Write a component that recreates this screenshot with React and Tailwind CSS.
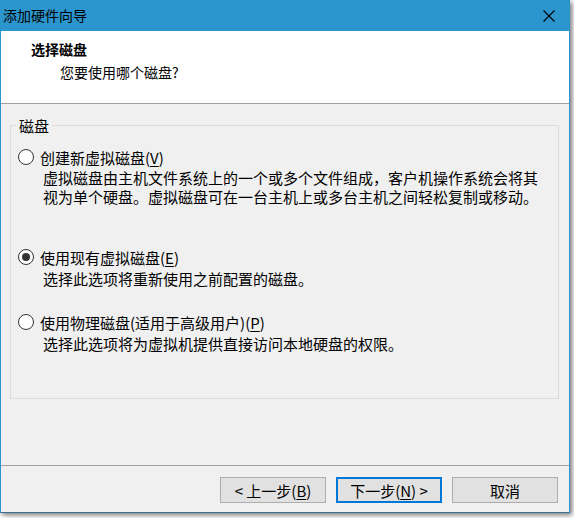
import React from "react";

function Radio({ checked }) {
  return (
    <span className="w-[16px] h-[16px] rounded-full border border-[#333333] bg-white flex items-center justify-center shrink-0">
      {checked && <span className="w-[8px] h-[8px] rounded-full bg-[#333333]" />}
    </span>
  );
}

export default function App() {
  return (
    <div className="w-[574px] h-[518px] bg-white text-black font-['Noto_Sans_CJK_SC','Microsoft_YaHei',sans-serif]">
      <div className="w-[570px] h-[513px] border border-t-0 border-[#2b95cd] border-b-[#3f6f8f] bg-[#f0f0f0] flex flex-col shadow-[2px_2px_5px_rgba(0,0,0,0.55)]">
        {/* Title bar */}
        <div className="h-[31px] bg-[#2b95cd] flex items-center justify-between pl-[2px] pr-[14px] shrink-0">
          <span className="text-[14px] leading-[19px]">添加硬件向导</span>
          <svg width="12" height="12" viewBox="0 0 12 12" className="block">
            <path d="M0.5 0.5 L11.5 11.5 M11.5 0.5 L0.5 11.5" stroke="#000" strokeWidth="1.1" fill="none" />
          </svg>
        </div>
        {/* Header */}
        <div className="h-[73px] bg-white border-b border-[#a0a0a0] pl-[30px] pt-[9px] shrink-0">
          <div className="text-[14px] leading-[19px] font-bold">选择磁盘</div>
          <div className="text-[14px] leading-[19px] mt-[4px] ml-[29px]">您要使用哪个磁盘?</div>
        </div>
        {/* Group box */}
        <div className="relative mt-[21px] ml-[9px] w-[549px] h-[274px] border border-[#dcdcdc] pt-[21px] pl-[7px] shrink-0 text-[15px] leading-[19px]">
          <span className="absolute left-[5px] top-[-10px] px-[3px] bg-[#f0f0f0] leading-[19px]">磁盘</span>
          <div className="flex items-center h-[20px] gap-[6px]">
            <Radio />
            <span>创建新虚拟磁盘(<span className="underline underline-offset-2">V</span>)</span>
          </div>
          <div className="mt-[1px] ml-[25px]">
            <div>虚拟磁盘由主机文件系统上的一个或多个文件组成，客户机操作系统会将其</div>
            <div>视为单个硬盘。虚拟磁盘可在一台主机上或多台主机之间轻松复制或移动。</div>
          </div>
          <div className="flex items-center h-[20px] gap-[6px] mt-[41px]">
            <Radio checked />
            <span>使用现有虚拟磁盘(<span className="underline underline-offset-2">E</span>)</span>
          </div>
          <div className="mt-[2px] ml-[25px]">选择此选项将重新使用之前配置的磁盘。</div>
          <div className="flex items-center h-[20px] gap-[6px] mt-[24px]">
            <Radio />
            <span>使用物理磁盘(适用于高级用户)(<span className="underline underline-offset-2">P</span>)</span>
          </div>
          <div className="mt-[2px] ml-[25px]">选择此选项将为虚拟机提供直接访问本地硬盘的权限。</div>
        </div>
        <div className="flex-1" />
        {/* Buttons */}
        <div className="h-[47px] border-t border-[#a0a0a0] pt-[11px] pr-[11px] flex justify-end gap-[10px] shrink-0 text-[15px]">
          <button className="w-[106px] h-[26px] bg-[#e1e1e1] border border-[#adadad] flex items-center justify-center leading-[19px]">
            &lt; 上一步(<span className="underline underline-offset-2">B</span>)
          </button>
          <button className="w-[106px] h-[26px] bg-[#e1e1e1] border-2 border-[#0078d7] flex items-center justify-center leading-[19px]">
            下一步(<span className="underline underline-offset-2">N</span>) &gt;
          </button>
          <button className="w-[106px] h-[26px] bg-[#e1e1e1] border border-[#adadad] flex items-center justify-center leading-[19px]">
            取消
          </button>
        </div>
      </div>
    </div>
  );
}
